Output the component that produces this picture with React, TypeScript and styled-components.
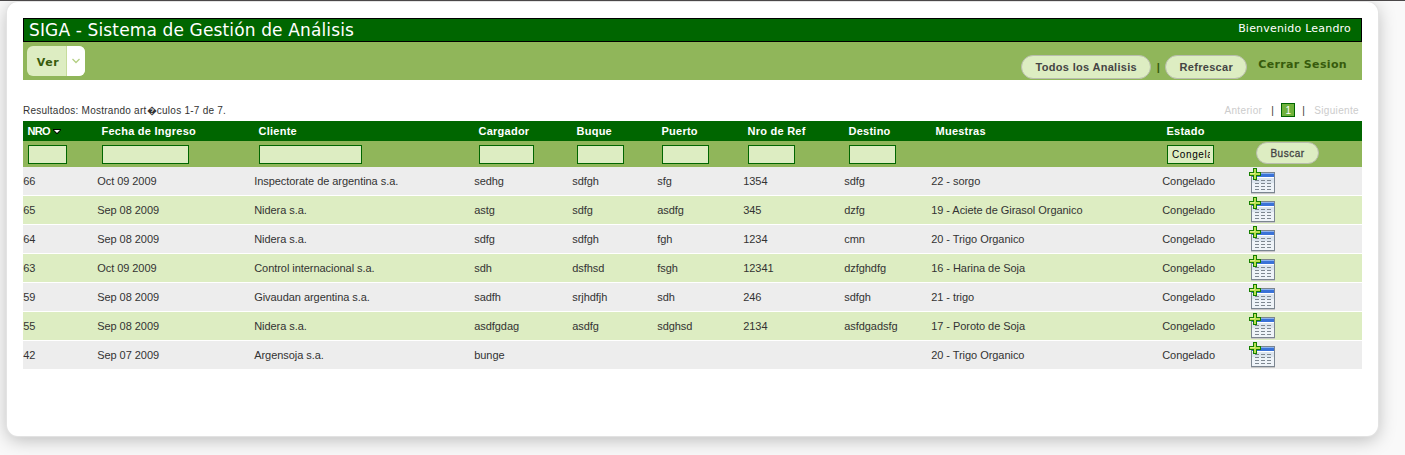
import React from "react";
import styled, { createGlobalStyle } from "styled-components";

const GlobalStyle = createGlobalStyle`
  * { box-sizing: border-box; }
  html, body { margin: 0; padding: 0; }
  body {
    height: 455px;
    overflow: hidden;
    background: #f9f9f9;
    font-family: "Liberation Sans", Arial, sans-serif;
    color: #333;
  }
`;

const Page = styled.div`
  height: 455px;
  padding: 1px 27px 0 7px;
  border-top: 1px solid #4a4748;
  overflow: hidden;
`;

const Card = styled.main`
  height: 434px;
  padding: 16px 16px 0;
  border-radius: 11px;
  background: #fff;
  box-shadow: 0 0 1px 1px #e4e4e4, 0 4px 18px rgba(0, 0, 0, 0.25);
`;

const TitleBar = styled.header`
  display: flex;
  justify-content: space-between;
  height: 24px;
  padding: 0 10px 0 5px;
  border: 1px solid #000;
  background: #006600;
  color: #fff;
  font-family: "DejaVu Sans", Verdana, sans-serif;
`;

const Title = styled.h1`
  margin: 0;
  font-size: 17px;
  font-weight: 400;
  line-height: 23px;
  letter-spacing: 0.14px;
  white-space: nowrap;
`;

const Welcome = styled.span`
  font-size: 11px;
  line-height: 19px;
  letter-spacing: 0.2px;
`;

const Toolbar = styled.nav`
  display: flex;
  justify-content: space-between;
  height: 38px;
  padding: 4px 15px 0 4px;
  background: #90b65a;
`;

const MenuButton = styled.button`
  display: flex;
  width: 58px;
  height: 30px;
  padding: 0;
  border: 0;
  border-radius: 6px;
  overflow: hidden;
  background: #ddedc2;
`;

const MenuLabel = styled.span`
  flex: 0 0 40px;
  border-right: 1px solid #c6dc9c;
  padding-left: 3px;
  color: #375b0c;
  font: bold 11px/33px "DejaVu Sans", Verdana, sans-serif;
  letter-spacing: 0.5px;
`;

const MenuArrow = styled.span`
  display: flex;
  flex: 1;
  align-items: center;
  justify-content: center;
  background: #fff;
`;

const Actions = styled.div`
  display: flex;
  align-items: flex-start;
  padding-top: 9px;
`;

const PillButton = styled.button<{ $width: number; $small?: boolean }>`
  width: ${(p) => p.$width}px;
  height: ${(p) => (p.$small ? 22 : 24)}px;
  padding: 0;
  border: 1px solid #b9bdae;
  border-radius: 12px;
  background: #ddedc2;
  color: #444;
  font-family: "Liberation Sans", Arial, sans-serif;
  font-size: ${(p) => (p.$small ? 10 : 11)}px;
  font-weight: ${(p) => (p.$small ? 400 : 700)};
  letter-spacing: ${(p) => (p.$small ? 0.5 : 0.3)}px;
  -webkit-text-stroke: ${(p) => (p.$small ? "0.3px #444" : "0")};
  white-space: nowrap;
`;

const Separator = styled.span`
  width: 14px;
  text-align: center;
  color: #375b0c;
  font-size: 11px;
  font-weight: 700;
  line-height: 24px;
`;

const LogoutLink = styled.a`
  margin-left: 11px;
  color: #375b0c;
  font: bold 11px/19px "DejaVu Sans", Verdana, sans-serif;
  letter-spacing: 0.35px;
  white-space: nowrap;
`;

const ResultsBar = styled.div`
  display: flex;
  justify-content: space-between;
  align-items: flex-start;
  height: 41px;
  padding: 23px 3px 0 0;
  font-size: 10px;
  line-height: 16px;
  letter-spacing: 0.25px;
`;

const Pager = styled.div`
  display: flex;
  align-items: flex-start;
  gap: 9px;
  letter-spacing: 0.35px;
`;

const PagerLink = styled.span`
  color: #ccc;
`;

const CurrentPage = styled.span`
  width: 14px;
  height: 14px;
  margin: 0 -2px;
  border: 1px solid #006600;
  background: #70b23c;
  color: #fff;
  line-height: 14px;
  text-align: center;
  letter-spacing: 0;
`;

const columns = "74px 157px 220px 98px 85px 86px 101px 87px 231px 87px 113px";

const Row = styled.div`
  display: grid;
  grid-template-columns: ${columns};
`;

const HeadRow = styled(Row)`
  height: 20px;
  background: #006600;
`;

const HeadCell = styled.div`
  padding-left: 4.5px;
  color: #fff;
  font-size: 11px;
  font-weight: 700;
  line-height: 21px;
  letter-spacing: 0.25px;
  white-space: nowrap;
  &:first-child { letter-spacing: -0.7px; }
`;

const SortArrow = styled.svg`
  margin-left: 3px;
  vertical-align: 1px;
`;

const FilterRow = styled(Row)`
  height: 26px;
  background: #90b65a;
`;

const FilterCell = styled.div`
  padding: 4px 0 0 5px;
`;

const FilterInput = styled.input<{ $width: number }>`
  display: block;
  width: ${(p) => p.$width}px;
  height: 19px;
  padding: 0 3px 0 4px;
  border: 1px solid #006600;
  border-radius: 0;
  background: #ddedc2;
  color: #000;
  font-family: "Liberation Sans", Arial, sans-serif;
  font-size: 10px;
  letter-spacing: 0.6px;
`;

const SearchCell = styled.div`
  padding: 1px 0 0 7px;
`;

const DataRow = styled(Row)<{ $even: boolean }>`
  height: 28px;
  margin-bottom: 1px;
  background: ${(p) => (p.$even ? "#ddedc2" : "#ededed")};
`;

const DataCell = styled.div`
  padding-left: 0.2px;
  font-size: 11px;
  line-height: 29px;
  letter-spacing: -0.05px;
  white-space: nowrap;
`;

const IconCell = styled.div`
  padding-top: 1px;
  svg { display: block; }
`;

const headers = ["NRO", "Fecha de Ingreso", "Cliente", "Cargador", "Buque", "Puerto", "Nro de Ref", "Destino", "Muestras", "Estado"];
const filterWidths = [39, 87, 103, 55, 47, 47, 47, 47, 0, 47];

const rows = [
  ["66", "Oct 09 2009", "Inspectorate de argentina s.a.", "sedhg", "sdfgh", "sfg", "1354", "sdfg", "22 - sorgo", "Congelado"],
  ["65", "Sep 08 2009", "Nidera s.a.", "astg", "sdfg", "asdfg", "345", "dzfg", "19 - Aciete de Girasol Organico", "Congelado"],
  ["64", "Sep 08 2009", "Nidera s.a.", "sdfg", "sdfgh", "fgh", "1234", "cmn", "20 - Trigo Organico", "Congelado"],
  ["63", "Oct 09 2009", "Control internacional s.a.", "sdh", "dsfhsd", "fsgh", "12341", "dzfghdfg", "16 - Harina de Soja", "Congelado"],
  ["59", "Sep 08 2009", "Givaudan argentina s.a.", "sadfh", "srjhdfjh", "sdh", "246", "sdfgh", "21 - trigo", "Congelado"],
  ["55", "Sep 08 2009", "Nidera s.a.", "asdfgdag", "asdfg", "sdghsd", "2134", "asfdgadsfg", "17 - Poroto de Soja", "Congelado"],
  ["42", "Sep 07 2009", "Argensoja s.a.", "bunge", "", "", "", "", "20 - Trigo Organico", "Congelado"],
];

const AddTableIcon = () => (
  <svg width="27" height="26" viewBox="0 0 27 26" shapeRendering="crispEdges">
    <path d="M2 25h24v1H2z" fill="#c8c8c8" />
    <path d="M2 4h24v21H2z" fill="#7b8590" />
    <path d="M3 5h22v19H3z" fill="#eef3f8" />
    <path d="M3 10h22v5H3z" fill="#dce5ee" />
    <path d="M3 5h22v1H3z" fill="#8db4ee" />
    <path d="M3 6h22v3H3z" fill="#3a72d8" />
    <path d="M3 9h22v1H3z" fill="#fff" />
    <path d="M6 12.5h4m2 0h4m2 0h4M6 15.500h4m2 0h4m2 0h4M6 18.500h4m2 0h4m2 0h4M6 21.500h4m2 0h4m2 0h4" stroke="#7d8790" fill="none" />
    <path d="M4 0h4v4h4v4H8v4H4V8H0V4h4z" fill="#168000" />
    <path d="M5 1h2v4h4v2H7v4H5V7H1V5h4z" fill="#b9e052" />
    <path d="M5 1h1v4H1v1h5V1z" fill="#e0f18c" />
  </svg>
);

export default function App() {
  return (
    <>
      <GlobalStyle />
      <Page>
        <Card>
          <TitleBar>
            <Title>SIGA - Sistema de Gestión de Análisis</Title>
            <Welcome>Bienvenido Leandro</Welcome>
          </TitleBar>
          <Toolbar>
            <MenuButton>
              <MenuLabel>Ver</MenuLabel>
              <MenuArrow>
                <svg width="8" height="6" viewBox="0 0 8 6" fill="none" stroke="#b4cf83" strokeWidth="1.3">
                  <path d="M.5 1L4 4.500 7.500 1" />
                </svg>
              </MenuArrow>
            </MenuButton>
            <Actions>
              <PillButton $width={130}>Todos los Analisis</PillButton>
              <Separator>|</Separator>
              <PillButton $width={82}>Refrescar</PillButton>
              <LogoutLink>Cerrar Sesion</LogoutLink>
            </Actions>
          </Toolbar>
          <ResultsBar>
            <span>Resultados: Mostrando art�culos 1-7 de 7.</span>
            <Pager>
              <PagerLink>Anterior</PagerLink>
              <span>|</span>
              <CurrentPage>1</CurrentPage>
              <span>|</span>
              <PagerLink>Siguiente</PagerLink>
            </Pager>
          </ResultsBar>
          <HeadRow>
            {headers.map((label, i) => (
              <HeadCell key={label}>
                {label}
                {i === 0 && (
                  <SortArrow width="8" height="5" viewBox="0 0 8 5">
                    <path d="M0 0h8v1L4.500 5h-1L0 1z" fill="#000" />
                    <path d="M1 1h6L4 4z" fill="#fff" />
                  </SortArrow>
                )}
              </HeadCell>
            ))}
          </HeadRow>
          <FilterRow>
            {filterWidths.map((width, i) => (
              <FilterCell key={i}>
                {width > 0 && <FilterInput $width={width} defaultValue={i === 9 ? "Congelado" : ""} />}
              </FilterCell>
            ))}
            <SearchCell>
              <PillButton $width={63} $small>Buscar</PillButton>
            </SearchCell>
          </FilterRow>
          {rows.map((cells, r) => (
            <DataRow key={r} $even={r % 2 === 1}>
              {cells.map((text, i) => (
                <DataCell key={i}>{text}</DataCell>
              ))}
              <IconCell>
                <AddTableIcon />
              </IconCell>
            </DataRow>
          ))}
        </Card>
      </Page>
    </>
  );
}
